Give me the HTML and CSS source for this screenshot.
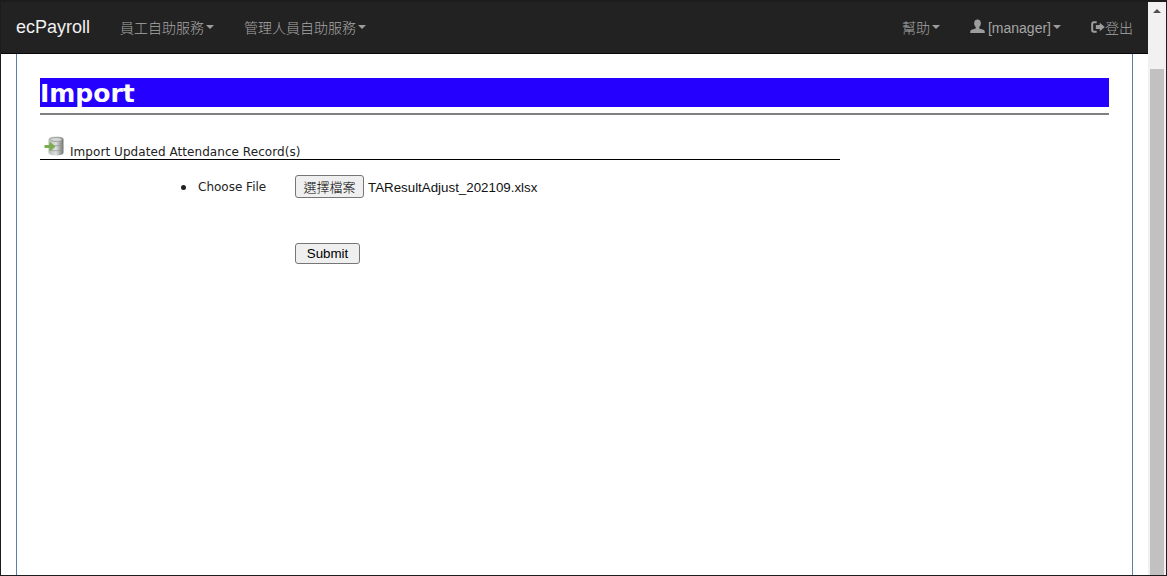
FILE: index.html
```html
<!DOCTYPE html>
<html lang="zh-Hant">
<head>
<meta charset="utf-8">
<title>ecPayroll</title>
<link rel="stylesheet" href="styles.css">
</head>
<body>
<div class="window">
  <div class="main">
    <nav class="navbar">
      <a class="brand">ecPayroll</a>
      <a class="nav-item nav-first">員工自助服務<i class="caret"></i></a>
      <a class="nav-item">管理人員自助服務<i class="caret"></i></a>
      <span class="nav-spacer"></span>
      <a class="nav-item">幫助<i class="caret"></i></a>
      <a class="nav-item nav-user">
        <svg class="icon-user" viewBox="0 0 16 16"><path fill="#9d9d9d" d="M8 0.5c2.200 0 3.600 1.700 3.600 4 0 1.600-.7 3.200-1.700 4.100v1.300c0 .5 4.900 1.300 5.600 2.600.2.500.3 1.400.3 2.500H.2c0-1.100.1-2 .3-2.500.7-1.300 5.600-2.100 5.600-2.600V8.600C5.100 7.700 4.400 6.100 4.400 4.500c0-2.300 1.400-4 3.600-4z"/></svg>
        <span class="user-name">[manager]</span><i class="caret"></i>
      </a>
      <a class="nav-item nav-logout">
        <svg class="icon-logout" viewBox="0 0 16 14"><path fill="#9d9d9d" d="M6.500 .5H3C1.300 .5 .2 1.700 .2 3.300v7.400C.2 12.300 1.300 13.500 3 13.500h3.500v-2.300H3.400c-.6 0-.9-.3-.9-.9V3.700c0-.6.3-.9.9-.9h3.100z"/><path fill="#9d9d9d" d="M10 2.200 15.800 7 10 11.800V9.200H5.500V4.800H10z"/></svg>登出
      </a>
    </nav>
    <div class="content">
      <div class="panel">
        <h1 class="page-title">Import</h1>
        <div class="title-rule"></div>
        <div class="section-head">
          <svg class="icon-db" viewBox="0 0 20 20">
            <defs>
              <linearGradient id="can" x1="0" x2="1" y1="0" y2="0">
                <stop offset="0" stop-color="#b9bdb9"/>
                <stop offset=".5" stop-color="#dfe1df"/>
                <stop offset="1" stop-color="#6f736f"/>
              </linearGradient>
            </defs>
            <path fill="url(#can)" d="M4.500 3.500C4.500 1.800 7.500 .5 12 .5S19.500 1.800 19.500 3.500v13c0 1.700-3 3-7.500 3s-7.500-1.300-7.500-3z"/>
            <ellipse cx="12" cy="3.500" rx="6" ry="2" fill="#d3d6d3" stroke="#8b8f8b" stroke-width=".7"/>
            <path fill="none" stroke="#8f938f" stroke-width=".7" d="M5 8.500c1.500 1.700 12 1.700 14 0M5 13.500c1.500 1.700 12 1.700 14 0"/>
            <path fill="#79ad50" d="M.5 9h5V5.500L11.500 10.500 5.500 15.500V12h-5z"/>
          </svg>
          <span>Import Updated Attendance Record(s)</span>
        </div>
        <div class="form">
          <ul class="field-list">
            <li class="field-item">Choose File</li>
          </ul>
          <div class="field-controls">
            <div class="file-row">
              <button class="btn btn-file" type="button">選擇檔案</button>
              <span class="file-name">TAResultAdjust_202109.xlsx</span>
            </div>
            <button class="btn btn-submit" type="button">Submit</button>
          </div>
        </div>
      </div>
    </div>
  </div>
  <div class="scrollbar">
    <div class="scroll-arrow"></div>
    <div class="scroll-thumb"></div>
  </div>
</div>
</body>
</html>
```

FILE: styles.css
```css
* { box-sizing: border-box; }
html, body { margin: 0; height: 100%; overflow: hidden; background: #fff; }
.window {
  display: flex;
  width: 1167px;
  height: 576px;
  border: 1px solid #1c1c1c;
  border-top-width: 2px;
  font-family: "Liberation Sans", "Noto Sans CJK TC", sans-serif;
}
.main { width: 1147px; display: flex; flex-direction: column; }
.navbar {
  height: 52px;
  flex: none;
  display: flex;
  align-items: center;
  background: #222;
  border-bottom: 1px solid #080808;
  padding: 0 15px 2px 15px;
  font-size: 14px;
  font-weight: 300;
  color: #a6a6a6;
}
.brand { color: #f0f0f0; font-size: 18px; font-weight: 400; padding-top: 2px; }
.nav-item { display: flex; align-items: center; white-space: nowrap; }
.nav-first { margin-left: 30px; }
.nav-item + .nav-item { margin-left: 30px; }
.nav-spacer { flex: 1; }
.nav-spacer + .nav-item { margin-left: 0; }
.nav-item.nav-user { margin-left: 29px; }
.user-name { padding-top: 2px; }
.caret {
  width: 0; height: 0; margin-left: 2px;
  border-top: 4px solid #9d9d9d;
  border-left: 4px solid transparent;
  border-right: 4px solid transparent;
}
.icon-user { width: 15px; height: 15px; margin-right: 3px; margin-left: 1px; }
.icon-logout { width: 14px; height: 14px; }
.content { flex: 1; padding: 0 15px; min-height: 0; }
.panel {
  height: 100%;
  width: 1117px;
  border-left: 1px solid #5b80a8;
  border-right: 1px solid #5b80a8;
  padding: 24px 23px 0;
  font-family: "DejaVu Sans", sans-serif;
}
.page-title {
  margin: 0;
  height: 29px;
  background: #2600ff;
  color: #fff;
  font-size: 25px;
  line-height: 31px;
  font-weight: bold;
  font-family: "DejaVu Sans", sans-serif;
}
.title-rule { height: 2px; margin-top: 6px; background: #808080; }
.section-head {
  width: 800px;
  height: 45px;
  border-bottom: 1px solid #000;
  display: flex;
  align-items: flex-end;
  font-size: 12px;
  letter-spacing: 0.06px;
  color: #222;
}
.section-head span { line-height: 14px; }
.icon-db { width: 20px; height: 20px; margin: 0 6px 3px 4px; flex: none; }
.form { display: flex; padding-top: 15px; }
.field-list {
  width: 255px;
  margin: 0;
  padding: 4px 0 0 141px;
  list-style: none;
  font-size: 12px;
  line-height: 16px;
  color: #222;
}
.field-item { display: flex; align-items: center; }
.field-item::before {
  content: "";
  width: 5px;
  height: 5px;
  margin-right: 12px;
  border-radius: 50%;
  background: #222;
}
.file-row { display: flex; align-items: center; height: 23px; }
.btn {
  font-family: "Liberation Sans", "Noto Sans CJK TC", sans-serif;
  color: #000;
  background: #efefef;
  border: 1px solid #767676;
  border-radius: 3px;
  padding: 0;
  display: block;
}
.btn-file { width: 69px; height: 23px; font-size: 13px; font-weight: 300; }
.file-name {
  margin-left: 4px;
  padding-top: 1px;
  font-family: "Liberation Sans", sans-serif;
  font-size: 13.333px;
  color: #111;
}
.btn-submit { width: 65px; height: 21px; margin-top: 45px; font-size: 13.333px; }
.scrollbar { flex: 1; background: #f1f1f1; display: flex; flex-direction: column; }
.scroll-arrow {
  width: 0; height: 0; margin: 7px auto 0;
  border-bottom: 4px solid #505050;
  border-left: 4px solid transparent;
  border-right: 4px solid transparent;
}
.scroll-thumb { margin: 56px 2px 0; flex: 1; background: #c1c1c1; }
```
